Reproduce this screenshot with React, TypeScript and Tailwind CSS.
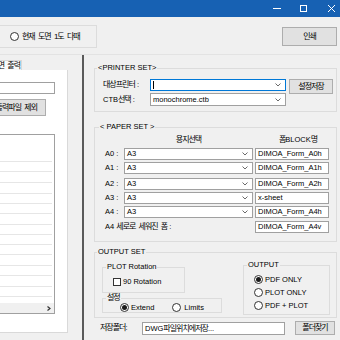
import React from "react";

function K({ children, className = "" }: { children: React.ReactNode; className?: string }) {
  return <span className={`text-[8px] tracking-[-1px] [word-spacing:2px] ${className}`}>{children}</span>;
}

function Radio({ on = false }: { on?: boolean }) {
  return (
    <span className="w-[9px] h-[9px] shrink-0 rounded-full border border-[#333] bg-white flex items-center justify-center">
      {on && <span className="w-[5px] h-[5px] rounded-full bg-[#1a1a1a]" />}
    </span>
  );
}

const Chevron = () => (
  <svg width="6" height="4" viewBox="0 0 6 4" className="shrink-0 ml-auto">
    <polyline points="0.5,0.5 3,3 5.5,0.5" fill="none" stroke="#6a6a6a" strokeWidth="1" />
  </svg>
);

function Combo({ children, className = "", focus = false }: { children?: React.ReactNode; className?: string; focus?: boolean }) {
  return (
    <div
      className={`bg-white border flex items-center pl-[2px] pr-[4px] whitespace-nowrap ${
        focus ? "border-[#0078d7]" : "border-[#a0a0a0]"
      } ${className}`}
    >
      {children}
      <Chevron />
    </div>
  );
}

function Field({ children, className = "" }: { children?: React.ReactNode; className?: string }) {
  return (
    <div className={`bg-white border border-[#a0a0a0] flex items-center pl-[2px] whitespace-nowrap overflow-hidden ${className}`}>
      {children}
    </div>
  );
}

const paperRows = [
  { label: "A0", form: "DIMOA_Form_A0h", gap: "mt-[3px]" },
  { label: "A1", form: "DIMOA_Form_A1h", gap: "mt-[2px]" },
  { label: "A2", form: "DIMOA_Form_A2h", gap: "mt-[4px]" },
  { label: "A3", form: "x-sheet", gap: "mt-[2px]" },
  { label: "A4", form: "DIMOA_Form_A4h", gap: "mt-[2px]" },
];

const listRows = [
  "h-[10px]", "h-[11px]", "h-[11px]", "h-[10px]", "h-[10px]", "h-[11px]", "h-[10px]",
  "h-[10px]", "h-[10px]", "h-[11px]", "h-[10px]", "h-[11px]", "h-[10px]",
];

const btn = "bg-[#e1e1e1] border border-[#adadad] flex items-center justify-center";

export default function App() {
  return (
    <div className="w-[340px] h-[340px] overflow-hidden bg-[#f0f0f0] flex flex-col text-[7.5px] leading-none text-black font-['Liberation_Sans','Noto_Sans_CJK_KR',sans-serif]">
      {/* title bar */}
      <div className="h-[17px] shrink-0 bg-[#1761b3] flex items-center justify-end pr-[5px]">
        <span className="w-[8px] h-px bg-white" />
        <span className="ml-[19px] w-[7px] h-[7px] border border-white" />
        <svg className="ml-[21px]" width="7" height="7" viewBox="0 0 7 7">
          <path d="M0 0L7 7M7 0L0 7" stroke="white" strokeWidth="1" />
        </svg>
      </div>

      {/* toolbar */}
      <div className="h-[38px] shrink-0 flex items-start border-b border-[#e3e3e3]">
        <div className="mt-[8px] w-[97px] h-[23px] border-y border-r border-[#dcdcdc] flex items-center pl-[10px] gap-[3px]">
          <Radio />
          <K className="whitespace-nowrap">현재 도면 1도 다때</K>
        </div>
        <button className={`ml-auto mt-[10px] mr-[3px] w-[55px] h-[19px] ${btn}`}>
          <K>인쇄</K>
        </button>
      </div>

      {/* main */}
      <div className="flex-1 flex min-h-0">
        {/* left tab panel */}
        <div className="w-[82px] shrink-0 flex flex-col">
          <div className="mt-[5px] h-[10px] w-[22px] bg-[#fafafa] border-t border-r border-[#d9d9d9] overflow-hidden flex items-center justify-end pr-[1px]">
            <K className="whitespace-nowrap">면 출력</K>
          </div>
          <div className="w-[68px] h-[263px] bg-white border-r border-b border-[#d9d9d9] flex flex-col">
            <Field className="mt-[12px] h-[12px] w-[55px] border-l-0" />
            <div className={`mt-[5px] h-[17px] w-[46px] border-l-0 overflow-hidden !justify-end pr-[8px] ${btn}`}>
              <K className="whitespace-nowrap">출력파일 제외</K>
            </div>
            <div className="mt-[18px] h-[180px] w-[55px] border border-l-0 border-[#a0a0a0] flex flex-col">
              <div className="h-[27px] shrink-0 border-b border-[#e6e6e6] mr-[2px]" />
              {listRows.map((h, i) => (
                <div key={i} className={`${h} shrink-0 border-b border-[#e6e6e6] mr-[2px]`} />
              ))}
              <div className="flex-1" />
              <div className="h-[10px] shrink-0 bg-[#f0f0f0] flex items-center justify-end pr-[3px]">
                <svg width="4" height="5" viewBox="0 0 4 5">
                  <polyline points="0.5,0.5 3,2.5 0.5,4.5" fill="none" stroke="#333" strokeWidth="1.2" />
                </svg>
              </div>
            </div>
          </div>
        </div>

        {/* splitter */}
        <div className="w-[2px] shrink-0 bg-[#5a5a5a]" />

        {/* right settings */}
        <div className="flex-1 flex flex-col pl-[10px] pr-[3px] pt-[8px]">
          <fieldset className="border border-[#dcdcdc] px-[2px] pb-[5px]">
            <legend className="leading-[10px] px-px">&lt;PRINTER SET&gt;</legend>
            <div className="mt-[6px] ml-[6px] flex items-start">
              <div className="flex flex-col gap-[2px]">
                <div className="flex items-center">
                  <span className="w-[47px] whitespace-nowrap">
                    <K>대상프린터</K> :
                  </span>
                  <Combo focus className="w-[136px] h-[12px]">
                    <span className="w-px h-[8px] bg-black" />
                  </Combo>
                </div>
                <div className="flex items-center">
                  <span className="w-[47px] whitespace-nowrap">
                    CTB<K>선택</K> :
                  </span>
                  <Combo className="w-[136px] h-[13px]">monochrome.ctb</Combo>
                </div>
              </div>
              <button className={`ml-[3px] w-[44px] h-[15px] ${btn}`}>
                <K>설정저장</K>
              </button>
            </div>
          </fieldset>

          <fieldset className="mt-[10px] border border-[#dcdcdc] px-[2px] pb-[8px]">
            <legend className="leading-[10px] ml-[2px] px-px whitespace-pre">&lt; PAPER SET &gt;</legend>
            <div className="mt-[3px] ml-[8px] h-[10px] flex items-center">
              <span className="w-[19px]" />
              <span className="w-[129px] text-center">
                <K>용지선택</K>
              </span>
              <span className="ml-[2px] w-[74px] pl-[12px] text-center whitespace-nowrap">
                <K>폼</K>BLOCK<K>명</K>
              </span>
            </div>
            {paperRows.map((r) => (
              <div key={r.label} className={`${r.gap} ml-[8px] h-[12px] flex items-center`}>
                <span className="w-[19px] whitespace-nowrap">{r.label} :</span>
                <Combo className="w-[129px] h-[12px]">A3</Combo>
                <Field className="ml-[2px] w-[74px] h-[12px]">{r.form}</Field>
              </div>
            ))}
            <div className="mt-[3px] ml-[8px] h-[12px] flex items-center">
              <span className="w-[150px] whitespace-nowrap">
                A4 <K>세로로 세워진 폼</K> :
              </span>
              <Field className="w-[74px] h-[12px]">DIMOA_Form_A4v</Field>
            </div>
          </fieldset>

          <fieldset className="mt-[5px] border border-[#dcdcdc] px-[2px] pb-[2px]">
            <legend className="leading-[10px] px-px">OUTPUT SET</legend>
            <div className="ml-[5px] flex items-start">
              <div className="w-[120px] flex flex-col">
                <fieldset className="mt-[5px] w-[83px] border border-[#dcdcdc] px-[2px] pb-[6px]">
                  <legend className="leading-[10px] ml-px px-px">PLOT Rotation</legend>
                  <div className="mt-[5px] ml-[8px] h-[9px] flex items-center gap-[2px]">
                    <span className="w-[8px] h-[8px] border border-[#333] bg-white" />
                    <span className="whitespace-nowrap">90 Rotation</span>
                  </div>
                </fieldset>
                <fieldset className="border border-[#dcdcdc] px-[2px]">
                  <legend className="leading-[10px] ml-px px-px">
                    <K>설정</K>
                  </legend>
                  <div className="ml-[15px] h-[9px] flex items-center">
                    <Radio on />
                    <span className="ml-[2px]">Extend</span>
                    <span className="ml-[18px]">
                      <Radio />
                    </span>
                    <span className="ml-[3px]">Limits</span>
                  </div>
                </fieldset>
              </div>
              <fieldset className="mt-[3px] ml-[21px] w-[87px] border border-[#dcdcdc] px-[2px] pb-[2px]">
                <legend className="leading-[10px] ml-px px-px">OUTPUT</legend>
                <div className="mt-[3px] flex flex-col">
                  {[
                    ["PDF ONLY", true],
                    ["PLOT ONLY", false],
                    ["PDF + PLOT", false],
                  ].map(([t, on]) => (
                    <div key={t as string} className="h-[13px] ml-[8px] flex items-center gap-[2px]">
                      <Radio on={on as boolean} />
                      <span className="whitespace-nowrap">{t as string}</span>
                    </div>
                  ))}
                </div>
              </fieldset>
            </div>
          </fieldset>

          <div className="mt-[3px] h-[14px] flex items-center">
            <span className="ml-[6px] w-[42px] whitespace-nowrap">
              <K>저장폴더</K>:
            </span>
            <Field className="w-[143px] h-[13px] mt-px">
              DWG<K>파일위치에저장</K>...
            </Field>
            <button className={`ml-[10px] w-[40px] h-[14px] ${btn}`}>
              <K>폴더찾기</K>
            </button>
          </div>
        </div>
      </div>
    </div>
  );
}
